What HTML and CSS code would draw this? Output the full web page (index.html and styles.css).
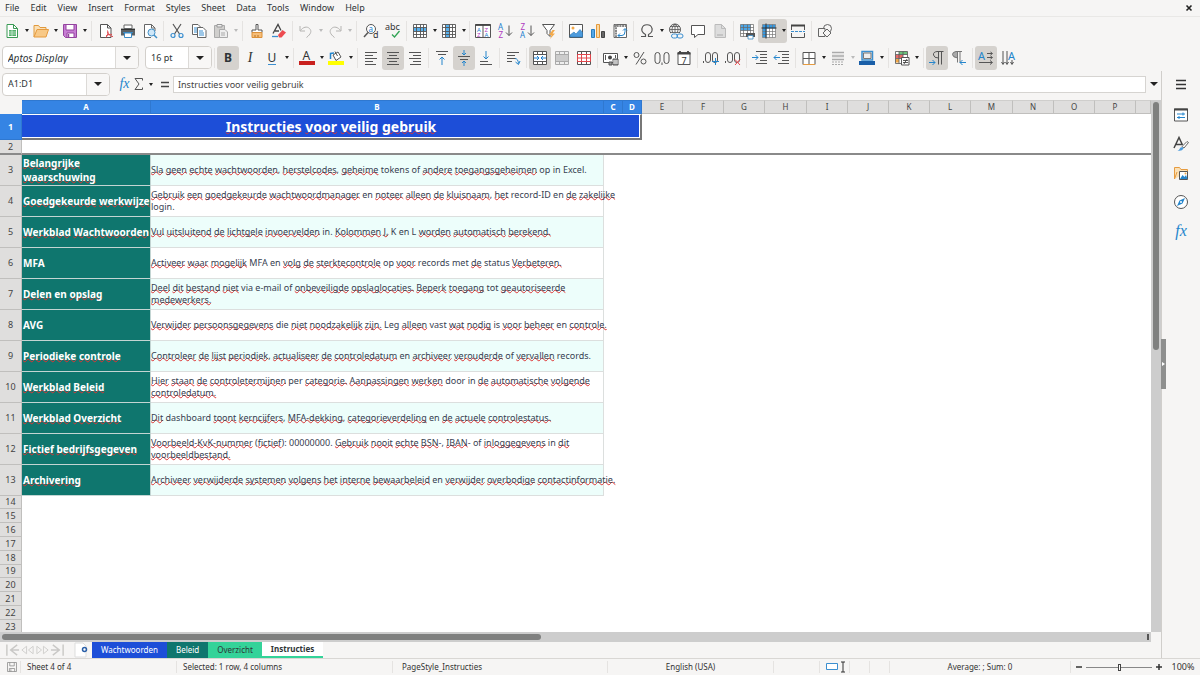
FILE: index.html
```html
<!DOCTYPE html>
<html lang="en">
<head>
<meta charset="utf-8">
<title>Instructies</title>
<link rel="stylesheet" href="styles.css">
</head>
<body>
<header class="top">
  <nav class="menubar">
    <button>File</button><button>Edit</button><button>View</button><button>Insert</button><button>Format</button><button>Styles</button><button>Sheet</button><button>Data</button><button>Tools</button><button>Window</button><button>Help</button>
    <button class="close" aria-label="Close document"><svg viewBox="0 0 8 8"><path d="M1.500 1.500l5 5M6.500 1.500l-5 5" stroke="#222" stroke-width="1.600"/></svg></button>
  </nav>
  <div class="toolbar" role="toolbar" aria-label="Standard">
    <button class="tool" aria-label="New"><svg viewBox="0 0 16 16"><path d="M3 1.500h6.500l4 4v9H3z" fill="#fff" stroke="#3a9a55"/><path d="M9.500 1.500v4h4" stroke="#3a9a55"/><path d="M5 7h7v6H5z" fill="#54b06c"/><path d="M5 9h7M5 11h7M8 7v6" stroke="#d9f0df" stroke-width=".7"/></svg></button><button class="drop" aria-label="New options"></button>
    <button class="tool" aria-label="Open"><svg viewBox="0 0 16 16"><path d="M1 14V2.500h4.500l1.500 2h6V7" fill="#fbe0b5" stroke="#e09a3e"/><path d="M1 14L4 6.500h11.500L13 14z" fill="#f8c987" stroke="#e69b3f"/></svg></button><button class="drop" aria-label="Open options"></button>
    <button class="tool" aria-label="Save"><svg viewBox="0 0 16 16"><path d="M1.500 1.500h13v13h-11l-2-2z" fill="#c77dd4" stroke="#94449f"/><path d="M4 1.500h8v5.500H4zM5 10h7v4.500H5z" fill="#fff" stroke="#94449f"/><path d="M6.500 11v3" stroke="#94449f" stroke-width="1.500"/></svg></button><button class="drop" aria-label="Save options"></button>
    <span class="sep"></span>
    <button class="tool" aria-label="Export as PDF"><svg viewBox="0 0 16 16"><path d="M2.500 1.500h7l3.500 3.500v9.500H2.500z" fill="#fff" stroke="#555"/><path d="M9.500 1.500v3.500h3.500" stroke="#555"/><path d="M8 14.500c2-3 2.500-4.500 1.500-7M9.500 9c1 3 3 4.500 5.500 4.500M8 13c2-1.500 4-2 6-1.500" stroke="#e0474c"/></svg></button>
    <button class="tool" aria-label="Print"><svg viewBox="0 0 16 16"><path d="M4 2h8v3.500H4z" fill="#fff" stroke="#666"/><path d="M1 5.500h14v7H1z" fill="#5b6165"/><path d="M1 6.500h14" stroke="#333"/><path d="M4.500 10h7v4.500h-7z" fill="#fff" stroke="#3b8ac4"/><path d="M3 9.500h10" stroke="#3b8ac4"/></svg></button>
    <button class="tool" aria-label="Print preview"><svg viewBox="0 0 16 16"><path d="M13 8V5L9.500 1.500h-7v13H9" fill="#fff" stroke="#666"/><path d="M9.500 1.500V5H13" stroke="#666"/><circle cx="9.500" cy="9.500" r="3.500" fill="#cfe7f8" stroke="#418fc7"/><path d="M12 12l3 3" stroke="#418fc7" stroke-width="1.500"/></svg></button>
    <span class="sep"></span>
    <button class="tool" aria-label="Cut"><svg viewBox="0 0 16 16"><path d="M4 1l6.500 10M12 1L5.500 11" stroke="#555" stroke-width="1.200"/><circle cx="4" cy="12.500" r="2" stroke="#3b8fd0" stroke-width="1.200"/><circle cx="12" cy="12.500" r="2" stroke="#3b8fd0" stroke-width="1.200"/></svg></button>
    <button class="tool" aria-label="Copy"><svg viewBox="0 0 16 16"><path d="M1.500 1.500h5.500l3 3v7H1.500z" fill="#fff" stroke="#666"/><path d="M3 5h4M3 7h3M3 9h3" stroke="#3b8fd0"/><path d="M6.500 4.500H12l3 3v7H6.500z" fill="#fff" stroke="#666"/><path d="M8 8h4M8 10h5M8 12h5" stroke="#3b8fd0"/></svg></button>
    <button class="tool" aria-label="Paste" disabled><svg viewBox="0 0 16 16"><path d="M1.500 2.500h10v12h-10z" fill="#d0cfcd" stroke="#aaa"/><path d="M4 1.500h5V4H4z" fill="#eee" stroke="#999"/><path d="M6.500 6.500H12l2.500 2.500v5.500h-8z" fill="#eee" stroke="#aaa"/><path d="M8 10h4M8 12h4" stroke="#aaa"/></svg></button><button class="drop" aria-label="Paste options" disabled></button>
    <span class="sep"></span>
    <button class="tool" aria-label="Clone formatting"><svg viewBox="0 0 16 16"><path d="M7 1.500h2V7h4v2.500H3V7h4z" fill="#fff" stroke="#555"/><path d="M3 9.500h10v5H3z" fill="#f6bd78" stroke="#dc9139"/><path d="M6 14v-2M9 14v-2" stroke="#b77424"/></svg></button>
    <button class="tool" aria-label="Clear formatting"><svg viewBox="0 0 16 16"><path d="M2 10.500L7 1.500l3 6M4 8h4" stroke="#444" stroke-width="1.300"/><path d="M1 13.500h6" stroke="#3b8fd0" stroke-width="1.300"/><path d="M7 12l4.500-5L15 9.500 10.500 14.500H8z" fill="#ed4b50"/></svg></button>
    <span class="sep"></span>
    <button class="tool" aria-label="Undo" disabled><svg viewBox="0 0 16 16"><path d="M2 3v5h5M2.500 7.500C5 4 9 3 11.500 5.500s1.500 5.500-3 9" stroke="#b5b4b2"/></svg></button><button class="drop" aria-label="Undo options" disabled></button>
    <button class="tool" aria-label="Redo" disabled><svg viewBox="0 0 16 16"><path d="M14 3v5H9M13.500 7.500C11 4 7 3 4.500 5.500S3 11 7.500 14.500" stroke="#b5b4b2"/></svg></button><button class="drop" aria-label="Redo options" disabled></button>
    <span class="sep"></span>
    <button class="tool" aria-label="Find and replace"><svg viewBox="0 0 16 16"><circle cx="8" cy="6" r="4.500" fill="#fff" stroke="#555"/><path d="M5 9.500L1 14" stroke="#555" stroke-width="1.500"/><text x="5.500" y="8.500" font-size="8" fill="#1c7fd0">a</text><text x="10" y="15" font-size="9" fill="#333">d</text></svg></button>
    <button class="tool" aria-label="Spelling"><svg viewBox="0 0 16 16"><text x="0" y="7" font-size="9" fill="#333">abc</text><path d="M7 11.500l2.500 2.500L14.500 8" stroke="#31a354" stroke-width="1.300"/></svg></button>
    <span class="sep"></span>
    <button class="tool" aria-label="Row"><svg viewBox="0 0 16 16"><path d="M1.500 1.500h13v13h-13z" fill="#fff"/><path d="M1.500 4.500h13v4h-13z" fill="#58b0ec"/><path d="M1.500 1.500h13v13h-13zM1.500 4.500h13M1.500 8.500h13M1.500 11.500h13M4.500 1.500v13M8.500 1.500v13M11.500 1.500v13" stroke="#555" stroke-width=".9"/></svg></button><button class="drop" aria-label="Row options"></button>
    <button class="tool" aria-label="Column"><svg viewBox="0 0 16 16"><path d="M1.500 1.500h13v13h-13z" fill="#fff"/><path d="M5 1.500h4v13H5z" fill="#58b0ec"/><path d="M1.500 1.500h13v13h-13zM1.500 4.500h13M1.500 8.500h13M1.500 11.500h13M4.500 1.500v13M8.500 1.500v13M11.500 1.500v13" stroke="#555" stroke-width=".9"/></svg></button><button class="drop" aria-label="Column options"></button>
    <span class="sep tight"></span>
    <button class="tool" aria-label="Sort"><svg viewBox="0 0 16 16"><path d="M.5 1.500h15v13H.5zM8 1.500v13" fill="#fff" stroke="#555"/><path d="M.5 2h15" stroke="#444" stroke-width="1.800"/><text x="2" y="8.500" font-size="6" fill="#1c7fd0">A</text><text x="2" y="14" font-size="6" fill="#b03ac0">Z</text><text x="9.500" y="8.500" font-size="6" fill="#b03ac0">Z</text><text x="9.500" y="14" font-size="6" fill="#1c7fd0">A</text></svg></button>
    <button class="tool" aria-label="Sort ascending"><svg viewBox="0 0 16 16"><text x="1" y="7" font-size="8" fill="#1c7fd0">A</text><text x="1.500" y="15" font-size="8" fill="#b03ac0">Z</text><path d="M12 2.500v10M9 9.500l3 3 3-3" stroke="#555"/></svg></button>
    <button class="tool" aria-label="Sort descending"><svg viewBox="0 0 16 16"><text x="1.500" y="7" font-size="8" fill="#b03ac0">Z</text><text x="1" y="15" font-size="8" fill="#1c7fd0">A</text><path d="M12 2.500v10M9 9.500l3 3 3-3" stroke="#555"/></svg></button>
    <button class="tool" aria-label="AutoFilter"><svg viewBox="0 0 16 16"><path d="M1.500 1.500h12L9 7.500v6l-3-3v-3z" fill="#fff" stroke="#555"/><path d="M11.500 7L8 12h2.500L9 16l5-5.500h-2.500L14 7z" fill="#f3a949"/></svg></button>
    <span class="sep"></span>
    <button class="tool" aria-label="Image"><svg viewBox="0 0 16 16"><path d="M1.500 1.500h13v13h-13z" fill="#fff" stroke="#555"/><circle cx="5" cy="5" r="1.500" fill="#f3a949"/><path d="M2 14V12l4-3 2 2 4-4.500 2.500 3V14z" fill="#4c9bdd" stroke="#2a78b8" stroke-width=".6"/></svg></button>
    <button class="tool" aria-label="Chart"><svg viewBox="0 0 16 16"><path d="M1.500 6.500h3v8h-3z" fill="#55a7e6" stroke="#2a7fc0"/><path d="M6.500 1.500h3v13h-3z" fill="#fbd9a2" stroke="#e49a3c"/><path d="M11.500 8.500h3v6h-3z" fill="#666" stroke="#444"/></svg></button>
    <button class="tool" aria-label="Pivot table"><svg viewBox="0 0 16 16"><path d="M2 1.500h12.500v13H2z" fill="#fff" stroke="#666"/><path d="M2 3h12.500M4 1.500v13" stroke="#888" stroke-width="2" stroke-dasharray="2 .7"/><path d="M6 12.500h4q3 0 3-4V6M8 10.500l-2 2 2 2M11 7.500L13 5.500l2 2" stroke="#2485cc"/></svg></button>
    <span class="sep"></span>
    <button class="tool" aria-label="Special character"><svg viewBox="0 0 16 16"><path d="M2 13.500h4.500v-2C3 9.500 2.500 7 3 5.500 4 .5 12 .5 13 5.500c.5 2-.5 4.500-3.500 6v2H14" stroke="#555" stroke-width="1.200"/></svg></button><button class="drop" aria-label="Character options"></button>
    <button class="tool" aria-label="Hyperlink"><svg viewBox="0 0 16 16"><circle cx="7" cy="6.500" r="5.500" stroke="#555"/><path d="M1.500 6.500h11M7 1v11M2.500 3.500h9M2.500 9.500h9M7 1C3 4 3 9 7 12M7 1c4 3 4 8 0 11" stroke="#555" stroke-width=".8"/><path d="M3 10h13v6H3z" fill="#f6f5f4"/><rect x="3.500" y="11" width="6" height="4" rx="2" stroke="#3b8fd0"/><rect x="9" y="11" width="6" height="4" rx="2" stroke="#3b8fd0"/></svg></button>
    <button class="tool" aria-label="Comment"><svg viewBox="0 0 16 16"><path d="M1.500 2.500h13v9H8l-3.500 3v-3h-3z" fill="#fff" stroke="#555"/></svg></button>
    <button class="tool" aria-label="Headers and footers" disabled><svg viewBox="0 0 16 16"><path d="M3 1.500h6.500l4 4v9H3z" fill="#ddd" stroke="#bbb"/><path d="M9.500 1.500v4h4" stroke="#bbb"/><path d="M5 11h6v2H5z" fill="#c4c4c4"/></svg></button>
    <span class="sep"></span>
    <button class="tool" aria-label="Print area"><svg viewBox="0 0 16 16"><path d="M1.500 1.500h13v10h-13z" fill="#fff"/><path d="M1.500 1.500h10v6h-10z" fill="#4ba5e6"/><path d="M1.500 1.500h13v12h-13zM1.500 4.500h13M1.500 7.500h13M1.500 10.500h13M4.500 1.500v12M8.500 1.500v12M11.500 1.500v12" stroke="#666" stroke-width=".7"/><path d="M7 10h9v4H7z" fill="#555"/><path d="M9 12.500h5V16H9z" fill="#fff" stroke="#3b8ac4" stroke-width=".8"/></svg></button>
    <span class="joined on"><button class="tool" aria-label="Freeze rows and columns" aria-pressed="true"><svg viewBox="0 0 16 16"><path d="M1.500 1.500h13v13h-13z" fill="#fff"/><path d="M1.500 1.500h13v4h-9v9h-4z" fill="#3698e0"/><path d="M1.500 1.500h13v13h-13zM1.500 8.500h13M1.500 11.500h13M8.500 1.500v13M11.500 1.500v13" stroke="#777" stroke-width=".7"/><path d="M.5 5h15M5 .5v15" stroke="#333"/></svg></button><button class="drop" aria-label="Freeze options"></button></span>
    <button class="tool" aria-label="Split window"><svg viewBox="0 0 16 16"><path d="M1.500 2v5M14.500 2v5M1.500 10v4.500h13V10" stroke="#555"/><path d="M1 2.500h14" stroke="#444" stroke-width="2"/><path d="M1 8.500h14" stroke="#3b8fd0" stroke-dasharray="3 1"/></svg></button>
    <span class="sep"></span>
    <button class="tool" aria-label="Draw functions"><svg viewBox="0 0 16 16"><circle cx="10.500" cy="5.500" r="4" stroke="#666"/><path d="M1.500 5.500h6.500v8H1.500z" fill="#f6f5f4" stroke="#666"/><path d="M10 6l4 4-4 4-4-4z" fill="#f6f5f4" stroke="#666"/></svg></button>
  </div>
  <div class="toolbar format" role="toolbar" aria-label="Formatting">
    <span class="combo font"><input aria-label="Font name" value="Aptos Display"><button aria-label="Choose font"></button></span>
    <span class="combo size"><input aria-label="Font size" value="16 pt"><button aria-label="Choose size"></button></span>
    <span class="sep"></span>
    <button class="tool on" aria-label="Bold" aria-pressed="true"><b>B</b></button>
    <button class="tool" aria-label="Italic"><i>I</i></button>
    <button class="tool" aria-label="Underline"><span class="ul">U</span></button><button class="drop" aria-label="Underline options"></button>
    <span class="sep"></span>
    <button class="tool" aria-label="Font color"><svg viewBox="0 0 16 16"><text x="3.500" y="10" font-size="12" fill="#333">A</text><path d="M0 11h16v4H0z" fill="#c9211e"/></svg></button><button class="drop" aria-label="Font color options"></button>
    <button class="tool" aria-label="Highlighting"><svg viewBox="0 0 16 16"><path d="M5 5l5-3 3 5-5 3.500z" fill="#fff" stroke="#555"/><path d="M7 1.500L9.500 6" stroke="#555"/><path d="M2.500 9V3.500L6 3" stroke="#2485cc" stroke-width="1.500"/><path d="M0 11h16v4H0z" fill="#ff0"/></svg></button><button class="drop" aria-label="Highlighting options"></button>
    <span class="sep"></span>
    <button class="tool" aria-label="Align left"><svg viewBox="0 0 16 16"><path d="M2 2.500h12M2 5.500h8M2 8.500h12M2 11.500h8M2 14.500h11" stroke="#555"/></svg></button>
    <button class="tool on" aria-label="Center" aria-pressed="true"><svg viewBox="0 0 16 16"><path d="M2 2.500h12M4 5.500h8M2 8.500h12M4 11.500h8M2 14.500h12" stroke="#555"/></svg></button>
    <button class="tool" aria-label="Align right"><svg viewBox="0 0 16 16"><path d="M2 2.500h12M6 5.500h8M2 8.500h12M6 11.500h8M3 14.500h11" stroke="#555"/></svg></button>
    <span class="sep"></span>
    <button class="tool" aria-label="Align top"><svg viewBox="0 0 16 16"><path d="M2 1.500h12M4 4.500h8" stroke="#555"/><path d="M8 15V7M5.500 9.500L8 7l2.500 2.500" stroke="#2485cc"/></svg></button>
    <button class="tool on" aria-label="Center vertically" aria-pressed="true"><svg viewBox="0 0 16 16"><path d="M2 6.500h12M4 9.500h8" stroke="#555"/><path d="M8 0v5M6 3l2 2 2-2M8 16v-5M6 13l2-2 2 2" stroke="#2485cc"/></svg></button>
    <button class="tool" aria-label="Align bottom"><svg viewBox="0 0 16 16"><path d="M2 11.500h8M2 14.500h12" stroke="#555"/><path d="M8 1v8M5.500 6.500L8 9l2.500-2.500" stroke="#2485cc"/></svg></button>
    <span class="sep"></span>
    <button class="tool" aria-label="Wrap text"><svg viewBox="0 0 16 16"><path d="M2 2.500h12M2 5.500h8M2 8.500h9M2 11.500h5" stroke="#555"/><path d="M10 8.500q3 0 3.500 5M10.500 12l3 2.500L15 11" stroke="#2485cc"/></svg></button>
    <span class="sep"></span>
    <button class="tool on" aria-label="Merge and center" aria-pressed="true"><svg viewBox="0 0 16 16"><path d="M1.500 1.500h13v13h-13z" fill="#fff"/><path d="M1.500 1.500h13v13h-13zM1.500 4.500h13M1.500 11.500h13M5.500 1.500v3M10.500 1.500v3M5.500 11.500v3M10.500 11.500v3" stroke="#555"/><path d="M2 8h5M14 8H9M5 6L7 8 5 10M11 6L9 8l2 2" stroke="#1c7fd0"/></svg></button>
    <button class="tool" aria-label="Merge cells" disabled><svg viewBox="0 0 16 16"><path d="M1.500 1.500h13v13h-13z" fill="#eee"/><path d="M1.500 4.500h13v7h-13z" fill="#ccc"/><path d="M1.500 1.500h13v13h-13zM1.500 4.500h13M1.500 11.500h13M5.500 1.500v3M10.500 1.500v3M5.500 11.500v3M10.500 11.500v3" stroke="#aaa"/></svg></button>
    <button class="tool" aria-label="Unmerge cells"><svg viewBox="0 0 16 16"><path d="M1.500 1.500h13v13h-13z" fill="#fff" stroke="#555"/><path d="M5.500 1.500v3M10.500 1.500v3M5.500 11.500v3M10.500 11.500v3" stroke="#555"/><path d="M1.500 4.500h13v7h-13zM5.500 4.500v7M10.500 4.500v7M1.500 8h13" stroke="#e0474c"/></svg></button>
    <span class="sep"></span>
    <button class="tool" aria-label="Currency"><svg viewBox="0 0 16 16"><path d="M.5 3.500h14v9H.5z" fill="#fff" stroke="#555"/><circle cx="7" cy="7.500" r="2" fill="#444"/><path d="M2.500 5v5M12.500 5v3" stroke="#555"/><path d="M6 12h3v3H6zM10 9h5v6h-5z" fill="#999" stroke="#555"/><path d="M10 11h5M10 13h5" stroke="#eee"/></svg></button><button class="drop" aria-label="Currency options"></button>
    <button class="tool" aria-label="Percent"><svg viewBox="0 0 16 16"><circle cx="4.500" cy="5" r="2.500" stroke="#555"/><circle cx="11.500" cy="11.500" r="2.500" stroke="#555"/><path d="M12 2L4 14.500" stroke="#555"/></svg></button>
    <button class="tool" aria-label="Number"><svg viewBox="0 0 16 16"><rect x="1" y="2.500" width="5" height="11" rx="2.500" stroke="#555"/><rect x="10" y="2.500" width="5" height="11" rx="2.500" stroke="#555"/><path d="M8 12.500v2.500" stroke="#555"/></svg></button>
    <button class="tool" aria-label="Date"><svg viewBox="0 0 16 16"><path d="M2 2.500h12v12H2z" fill="#fff" stroke="#555"/><path d="M1.500 3.500h13M4 1v3M12 1v3" stroke="#444" stroke-width="1.800"/><text x="5.500" y="13.500" font-size="9" fill="#333">7</text></svg></button>
    <span class="sep"></span>
    <button class="tool" aria-label="Add decimal place"><svg viewBox="0 0 16 16"><rect x="2.500" y="2.500" width="5" height="10" rx="2.500" stroke="#555"/><rect x="9.500" y="2.500" width="5" height="10" rx="2.500" stroke="#555"/><path d="M.5 11v2" stroke="#555"/><path d="M12.500 8v7M9 11.500h7" stroke="#2485cc"/></svg></button>
    <button class="tool" aria-label="Delete decimal place"><svg viewBox="0 0 16 16"><rect x="2.500" y="2.500" width="5" height="10" rx="2.500" stroke="#555"/><rect x="9.500" y="2.500" width="5" height="10" rx="2.500" stroke="#555"/><path d="M.5 11v2" stroke="#555"/><path d="M10 9.500l5 5.500M15 9.500L10 15" stroke="#ed4b50"/></svg></button>
    <span class="sep"></span>
    <button class="tool" aria-label="Increase indent"><svg viewBox="0 0 16 16"><path d="M4 1.500h11M8 4.500h7M8 7.500h7M8 10.500h7M4 13.500h11" stroke="#555"/><path d="M0 7.500h6M3.500 5L6 7.500 3.500 10" stroke="#2485cc"/></svg></button>
    <button class="tool" aria-label="Decrease indent"><svg viewBox="0 0 16 16"><path d="M4 1.500h11M8 4.500h7M8 7.500h7M8 10.500h7M4 13.500h11" stroke="#555"/><path d="M0 7.500h6M2.500 5L0 7.500 2.500 10" stroke="#2485cc"/></svg></button>
    <span class="sep"></span>
    <button class="tool" aria-label="Borders"><svg viewBox="0 0 16 16"><path d="M2 2.500v12h12v-12zM8 2.500v12M2 8.500h12" fill="#fff" stroke="#555"/><path d="M2 14.500h12" stroke="#e69b3f"/></svg></button><button class="drop" aria-label="Border options"></button>
    <button class="tool" aria-label="Border style" disabled><svg viewBox="0 0 16 16"><path d="M2 2.500h12M2 9.500h12" stroke="#aaa" stroke-width="1.500"/><path d="M2 6h12" stroke="#bbb" stroke-width="2.500"/><path d="M2 12h12M2 14.500h12" stroke="#aaa" stroke-dasharray="2 1"/></svg></button><button class="drop" aria-label="Border style options" disabled></button>
    <button class="tool" aria-label="Border color"><svg viewBox="0 0 16 16"><path d="M3 1.500h10.500V10H3z" fill="#eee" stroke="#3b8fd0" stroke-width="1.500"/><path d="M4.500 3h7.500v5.500H4.500z" stroke="#777"/><path d="M0 11h16v4H0z" fill="#1a5fa8"/></svg></button><button class="drop" aria-label="Border color options"></button>
    <span class="sep"></span>
    <button class="tool" aria-label="Conditional formatting"><svg viewBox="0 0 16 16"><path d="M1.500 1.500h12v11h-12z" fill="#fff"/><path d="M5 1.500h8.500v3H5z" fill="#6ac27a"/><path d="M1.500 5H5v3H1.500zM5 5h4v3H5z" fill="#e86a6a"/><path d="M1.500 9H5v3.500H1.500z" fill="#f3a949"/><path d="M1.500 1.500h12v12h-12zM1.500 4.500h12M1.500 8.500h12M5 1.500v12M9 1.500v12" stroke="#555" stroke-width=".8"/><path d="M7.500 7.500h7.500V15H7.500z" fill="#fff" stroke="#555"/><path d="M9 10.500h5M9 12.500h5M13 9l-3 5" stroke="#333" stroke-width=".8"/></svg></button><button class="drop" aria-label="Conditional options"></button>
    <span class="sep"></span>
    <button class="tool on" aria-label="Left to right" aria-pressed="true"><svg viewBox="0 0 16 16"><path d="M9.500 14.500v-13M12.500 14.500v-13M14.500 1.500H8q-4 .5-3.500 3.500T9.500 8" stroke="#555"/><path d="M0 12.500h6M3.500 10L6 12.500 3.500 15" stroke="#2485cc"/></svg></button>
    <button class="tool" aria-label="Right to left"><svg viewBox="0 0 16 16"><path d="M7 1.500Q1.500 1 1.500 4.500T7 8z" fill="#aaa"/><path d="M6.500 12.500v-11M9 12.500v-11M11 1.500H5Q1.500 2 1.500 4.500T6.500 8" stroke="#777"/><path d="M9 12.500h6M11.500 10L9 12.500l2.500 2.500" stroke="#2485cc"/></svg></button>
    <span class="sep"></span>
    <button class="tool on" aria-label="Text direction left to right" aria-pressed="true"><svg viewBox="0 0 16 16"><text x="0" y="9.500" font-size="11" fill="#2485cc">A</text><path d="M9 3.500h5M9 7.500h5M1 12.500h13M12.500 2L14.500 3.500 12.500 5M12.500 6l2 1.500-2 1.500M12 10.500l2.500 2-2.500 2" stroke="#555"/></svg></button>
    <button class="tool" aria-label="Text direction top to bottom"><svg viewBox="0 0 16 16"><text x="8" y="9.500" font-size="11" fill="#2485cc">A</text><path d="M3 1v13M7 1v13M12 10v4M1.500 12L3 14.500 4.500 12M5.500 12L7 14.500 8.500 12M10.500 12l1.500 2.500 1.500-2.500" stroke="#555"/></svg></button>
  </div>
</header>
<main class="work">
  <section class="sheet">
    <div class="formulabar">
      <span class="combo name"><input aria-label="Name box" value="A1:D1"><button aria-label="Choose range"></button></span>
      <button class="fx" aria-label="Function wizard"><i>fx</i></button>
      <button class="mini" aria-label="Sum"><svg viewBox="0 0 12 16"><path d="M9.500 4.500V2.500H2L6 8l-4 5.500h7.500v-2" stroke="#555"/></svg></button><button class="drop" aria-label="Sum options"></button>
      <button class="mini eq" aria-label="Formula"><svg viewBox="0 0 12 16"><path d="M2 6.500h8M2 10.500h8" stroke="#444" stroke-width="1.500"/></svg></button>
      <input class="formula" aria-label="Input line" value="Instructies voor veilig gebruik">
      <button class="expand" aria-label="Expand formula bar"></button>
    </div>
    <div class="gridarea">
      <div class="gridbox">
      <table class="grid">
        <colgroup><col class="rh"><col class="ca"><col class="cb"><col class="cc"><col class="cd"><col class="cn"><col class="cn"><col class="cn"><col class="cw"><col class="cn"><col class="cn"><col class="cn"><col class="cn"><col class="cw"><col class="cn"><col class="cn"><col class="cn"><col></colgroup>
        <thead><tr><th class="corner"></th><th class="sel">A</th><th class="sel">B</th><th class="sel">C</th><th class="sel">D</th><th>E</th><th>F</th><th>G</th><th>H</th><th>I</th><th>J</th><th>K</th><th>L</th><th>M</th><th>N</th><th>O</th><th>P</th><th></th></tr></thead>
        <tbody>
          <tr class="r1"><th class="sel">1</th><td class="title" colspan="4"><u>Instructies</u> <u>voor</u> <u>veilig</u> <u>gebruik</u></td><td colspan="13"></td></tr>
          <tr class="r2"><th>2</th><td colspan="17"></td></tr>
          <tr class="rec"><th>3</th><td class="key"><u>Belangrijke</u><br><u>waarschuwing</u></td><td class="txt"><u>Sla</u> <u>geen</u> <u>echte</u> <u>wachtwoorden</u>, <u>herstelcodes</u>, <u>geheime</u> tokens of <u>andere</u> <u>toegangsgeheimen</u> op in Excel.</td><td colspan="15"></td></tr>
          <tr class="rec"><th>4</th><td class="key"><u>Goedgekeurde</u> <u>werkwijze</u></td><td class="txt"><u>Gebruik</u> <u>een</u> <u>goedgekeurde</u> <u>wachtwoordmanager</u> en <u>noteer</u> <u>alleen</u> <u>de</u> <u>kluisnaam</u>, <u>het</u> record-ID en <u>de</u> <u>zakelijke</u><br>login.</td><td colspan="15"></td></tr>
          <tr class="rec"><th>5</th><td class="key"><u>Werkblad</u> <u>Wachtwoorden</u></td><td class="txt"><u>Vul</u> <u>uitsluitend</u> <u>de</u> <u>lichtgele</u> <u>invoervelden</u> in. <u>Kolommen</u> <u>J,</u> K en L <u>worden</u> <u>automatisch</u> <u>berekend.</u></td><td colspan="15"></td></tr>
          <tr class="rec"><th>6</th><td class="key">MFA</td><td class="txt"><u>Activeer</u> <u>waar</u> <u>mogelijk</u> MFA en <u>volg</u> <u>de</u> <u>sterktecontrole</u> op <u>voor</u> records met <u>de</u> status <u>Verbeteren.</u></td><td colspan="15"></td></tr>
          <tr class="rec"><th>7</th><td class="key"><u>Delen</u> en <u>opslag</u></td><td class="txt"><u>Deel</u> <u>dit</u> <u>bestand</u> <u>niet</u> via e-mail of <u>onbeveiligde</u> <u>opslaglocaties.</u> <u>Beperk</u> <u>toegang</u> tot <u>geautoriseerde</u><br><u>medewerkers.</u></td><td colspan="15"></td></tr>
          <tr class="rec"><th>8</th><td class="key">AVG</td><td class="txt"><u>Verwijder</u> <u>persoonsgegevens</u> die <u>niet</u> <u>noodzakelijk</u> <u>zijn.</u> Leg <u>alleen</u> vast <u>wat</u> <u>nodig</u> is <u>voor</u> <u>beheer</u> en <u>controle.</u></td><td colspan="15"></td></tr>
          <tr class="rec"><th>9</th><td class="key"><u>Periodieke</u> <u>controle</u></td><td class="txt"><u>Controleer</u> <u>de</u> <u>lijst</u> <u>periodiek</u>, <u>actualiseer</u> <u>de</u> <u>controledatum</u> en <u>archiveer</u> <u>verouderde</u> of <u>vervallen</u> records.</td><td colspan="15"></td></tr>
          <tr class="rec"><th>10</th><td class="key"><u>Werkblad</u> <u>Beleid</u></td><td class="txt"><u>Hier</u> <u>staan</u> <u>de</u> <u>controletermijnen</u> per <u>categorie.</u> <u>Aanpassingen</u> <u>werken</u> door in <u>de</u> <u>automatische</u> <u>volgende</u><br><u>controledatum.</u></td><td colspan="15"></td></tr>
          <tr class="rec"><th>11</th><td class="key"><u>Werkblad</u> <u>Overzicht</u></td><td class="txt"><u>Dit</u> dashboard <u>toont</u> <u>kerncijfers</u>, <u>MFA-dekking</u>, <u>categorieverdeling</u> en <u>de</u> <u>actuele</u> <u>controlestatus.</u></td><td colspan="15"></td></tr>
          <tr class="rec"><th>12</th><td class="key"><u>Fictief</u> <u>bedrijfsgegeven</u></td><td class="txt"><u>Voorbeeld-KvK-nummer</u> (<u>fictief</u>): 00000000. <u>Gebruik</u> <u>nooit</u> <u>echte</u> <u>BSN</u>-, <u>IBAN</u>- of <u>inloggegevens</u> in <u>dit</u><br><u>voorbeeldbestand.</u></td><td colspan="15"></td></tr>
          <tr class="rec"><th>13</th><td class="key"><u>Archivering</u></td><td class="txt"><u>Archiveer</u> <u>verwijderde</u> <u>systemen</u> <u>volgens</u> <u>het</u> <u>interne</u> <u>bewaarbeleid</u> en <u>verwijder</u> <u>overbodige</u> <u>contactinformatie.</u></td><td colspan="15"></td></tr>
        </tbody>
        <tbody class="blank">
          <tr><th>14</th><td colspan="17"></td></tr><tr><th>15</th><td colspan="17"></td></tr><tr><th>16</th><td colspan="17"></td></tr><tr><th>17</th><td colspan="17"></td></tr><tr><th>18</th><td colspan="17"></td></tr><tr><th>19</th><td colspan="17"></td></tr><tr><th>20</th><td colspan="17"></td></tr><tr><th>21</th><td colspan="17"></td></tr><tr><th>22</th><td colspan="17"></td></tr><tr><th>23</th><td colspan="17"></td></tr>
        </tbody>
      </table>
      </div>
      <div class="vscroll"><span></span></div>
    </div>
    <div class="hscroll"><span></span><i></i></div>
    <div class="tabs">
      <button class="nav" aria-label="First sheet"><svg viewBox="0 0 16 16"><path d="M2 2v12M13 2.500L6 8l7 5.500M6 8h9" stroke="#c9c8c6" stroke-width="1.500"/></svg></button>
      <button class="nav" aria-label="Previous sheet"><svg viewBox="0 0 16 16"><path d="M7 4L2 8l5 4zM14 4L9 8l5 4z" stroke="#cfcecc"/></svg></button>
      <button class="nav" aria-label="Next sheet"><svg viewBox="0 0 16 16"><path d="M2 4l5 4-5 4zM9 4l5 4-5 4z" stroke="#cfcecc"/></svg></button>
      <button class="nav" aria-label="Last sheet"><svg viewBox="0 0 16 16"><path d="M14 2v12M3 2.500L10 8l-7 5.500M1 8h9" stroke="#c9c8c6" stroke-width="1.500"/></svg></button>
      <button class="add" aria-label="Add sheet"><svg viewBox="0 0 14 16"><path d="M1 1h8l3 3v11H1z" fill="#fff" stroke="#ddd"/><circle cx="10.500" cy="7.500" r="2" stroke="#2a5fa8" stroke-width="1.500"/></svg></button>
      <button class="tab indigo">Wachtwoorden</button><button class="tab teal">Beleid</button><button class="tab green">Overzicht</button><button class="tab current">Instructies</button>
    </div>
  </section>
  <aside class="sidebar">
    <button aria-label="Sidebar settings"><svg viewBox="0 0 16 16"><path d="M3 4.500h10M3 8.500h10M3 12.500h10" stroke="#333" stroke-width="1.500"/></svg></button>
    <button aria-label="Properties"><svg viewBox="0 0 16 16"><path d="M1.500 2h13v12h-13z" fill="#fff" stroke="#555"/><path d="M1 2.500h14" stroke="#444" stroke-width="2"/><path d="M4 7h8M4 10.500h8M10 5.500v3M6 9v3" stroke="#2485cc"/></svg></button>
    <button aria-label="Styles"><svg viewBox="0 0 16 16"><path d="M1 12L6 1.500 9.500 9M3 8.500h6" stroke="#444" stroke-width="1.500"/><path d="M9 10.500L14 5.500l1.500 1L11 12z" fill="#fff" stroke="#666"/><path d="M4.500 14.500q2-.5 3-3 3-1 3 1-1.500 3-6 2z" fill="#4c9bdd"/></svg></button>
    <button aria-label="Gallery"><svg viewBox="0 0 16 16"><path d="M1.500 14V2.500h5l1.500 2h6.500V7" fill="#fbe0b5" stroke="#e69b3f"/><path d="M1.500 14L4 7" stroke="#e69b3f"/><path d="M6.500 6.500h8v8h-8z" fill="#fff" stroke="#555"/><path d="M7 14l2.500-4 2 2 1.500-2 1.500 4z" fill="#2485cc"/><circle cx="12.500" cy="8.500" r="1" fill="#f3a949"/></svg></button>
    <button aria-label="Navigator"><svg viewBox="0 0 16 16"><circle cx="8" cy="8" r="6.500" fill="#fff" stroke="#555"/><path d="M12 4L9.500 9.500 4 12l2.500-5.500z" fill="#2485cc"/><circle cx="8" cy="8" r="1" fill="#fff"/></svg></button>
    <button class="fx" aria-label="Functions"><i>fx</i></button>
    <span class="handle"></span>
  </aside>
</main>
<footer class="status">
  <span class="disk"><svg viewBox="0 0 16 16"><path d="M2 2h12v12H2zM5 2v4.500h6V2M4.500 14v-4h7v4M6.500 11v3" stroke="#888"/></svg></span>
  <span class="s1">Sheet 4 of 4</span>
  <span class="s2">Selected: 1 row, 4 columns</span>
  <span class="s3">PageStyle_Instructies</span>
  <span class="s4">English (USA)</span>
  <span class="s5"></span>
  <span class="s6"><svg viewBox="0 0 20 12"><path d="M.5 2.500h11v6H.5z" fill="#fff" stroke="#3b8fd0"/><path d="M15 1h4M17 1v10M15 11h4" stroke="#333"/></svg></span>
  <span class="s7"></span><span class="s7"></span>
  <span class="s8">Average: ; Sum: 0</span>
  <button class="zb" aria-label="Zoom out"><svg viewBox="0 0 8 8"><path d="M1 4h6" stroke="#333" stroke-width="1.500"/></svg></button>
  <input class="zoom" type="range" aria-label="Zoom" min="0" max="100" value="50">
  <button class="zb" aria-label="Zoom in"><svg viewBox="0 0 8 8"><path d="M1 4h6M4 1v6" stroke="#333" stroke-width="1.500"/></svg></button>
  <span class="s9">100%</span>
</footer>
</body>
</html>
```
FILE: styles.css
```css
* { box-sizing: border-box; }
body {
  margin: 0;
  height: 100vh;
  display: flex;
  flex-direction: column;
  overflow: hidden;
  background: #f6f5f4;
  color: #2e3436;
  font: 9px/12px "Noto Sans", sans-serif;
}
button, input { font: inherit; color: inherit; margin: 0; padding: 0; border: 0; background: none; }
svg { display: block; fill: none; overflow: visible; }

.menubar { display: flex; height: 17px; border-bottom: 1px solid #e9e8e6; }
.menubar button { padding: 0 6px 0 5px; }
.menubar .close { margin-left: auto; margin-right: 1px; padding: 0 6px; }
.close svg { width: 8px; height: 8px; }

.toolbar { display: flex; align-items: center; height: 27px; padding-left: 1px; }
.toolbar > * { flex-shrink: 0; }
.tool { display: flex; align-items: center; justify-content: center; width: 22px; height: 24px; border-radius: 3px; font-size: 14px; }
.tool svg { width: 16px; height: 16px; }
.tool i { font-family: "Liberation Serif", serif; }
.tool .ul { font-size: 12px; line-height: 13px; border-bottom: 1px solid #3b8fd0; }
.tool b { font-size: 12px; }
.on { background: #d5d2ce; border-radius: 3px; }
.joined { display: flex; }
.drop { display: flex; align-items: center; justify-content: center; width: 7px; height: 24px; }
.drop::after, .combo button::after, .expand::after { content: ""; border: 2px solid transparent; border-top: 3px solid #222; border-bottom: 0; }
.drop:disabled::after { border-top-color: #bbb; }
.sep { width: 1px; height: 20px; margin: 0 2px; background: #e5e3e1; }
.drop + .sep { margin: 0 3px; }
.drop + .sep.tight { margin: 0 2px; }
.format .drop + .sep { margin: 0 2px 0 3px; }

.combo { display: flex; height: 23px; border: 1px solid #d3d0cc; border-radius: 4px; background: #fff; overflow: hidden; }
.combo input { flex: 1; min-width: 0; padding-left: 5px; }
.combo button { display: flex; align-items: center; justify-content: center; width: 23px; border-left: 1px solid #dcdad7; background: #f8f7f6; }
.combo button::after, .expand::after { border-width: 4px 4px 0; }
.font { width: 137px; margin: 0 6px 0 1px; }
.font input { font-style: italic; font-size: 10px; }
.size { width: 67px; }

.work { flex: 1; display: flex; min-height: 0; }
.sheet { flex: 1; min-width: 0; display: flex; flex-direction: column; }
.formulabar { display: flex; align-items: center; height: 26px; margin-bottom: 3px; padding-left: 2px; }
.name { width: 108px; margin-right: 7px; }
.fx { width: 15px; font-family: "Liberation Serif", serif; font-size: 14px; color: #2485cc; }
.mini { width: 14px; margin-left: 1px; }
.mini svg { width: 12px; height: 16px; }
.eq { margin: 0 0 0 5px; }
.formula { flex: 1; min-width: 0; height: 17px; padding-left: 4px; border: 1px solid #d6d4d1; background: #fff; color: #444; }
.expand { display: flex; align-items: center; justify-content: center; width: 15px; height: 20px; }

.gridarea { flex: 1; display: flex; min-height: 0; background: #fff; }
.gridbox { flex: 1; min-width: 0; overflow: hidden; }
.grid { width: 100%; table-layout: fixed; border-collapse: separate; border-spacing: 0; }
.grid th, .grid td { padding: 0; }
.rh { width: 22px; } .ca { width: 129px; } .cb { width: 453px; } .cc, .cd { width: 19px; } .cn { width: 41px; } .cw { width: 42px; }
.grid th { background: #dfdedd; color: #444; font-weight: 400; border-right: 1px solid #c0bfbd; border-bottom: 1px solid #c0bfbd; line-height: 12px; }
.grid thead th { height: 14px; font-size: 8px; border-top: 1px solid #cfcecc; }
.grid thead .corner { background: #f6f5f4; border-color: #f6f5f4; }
.grid th.sel { background: #3584e4; color: #fff; font-weight: 700; border-color: #2f78d0; }
.r1 > * { height: 26px; }
.r1 .title {
  background: #1d4ed8;
  color: #fff;
  font-size: 14px;
  font-weight: 700;
  line-height: 18px;
  text-align: center;
  border-top: 1px solid #fff;
  border-right: 2px solid #777;
  border-bottom: 2px solid #777;
  box-shadow: inset 0 -1px #fff, inset -1px 0 #fff;
}
.r2 > * { height: 15px; }
.grid .r2 > * { border-bottom: 2px solid #8a8a8a; }
.rec > * { height: 31px; }
.key, .txt { white-space: nowrap; }
.key { background: #0f766e; color: #fff; font-size: 10px; font-weight: 700; line-height: 14px; border-bottom: 1px solid #c3d5d3; border-right: 1px solid #c3d5d3; }
.grid .key { padding-left: 1px; }
.txt { color: #374151; border-bottom: 1px solid #dcdfde; border-right: 1px solid #dcdfde; }
.rec:nth-child(odd) .txt { background: #edfefb; }
.grid u { text-decoration: underline wavy #dd3333 1px; text-underline-offset: -2px; text-decoration-skip-ink: none; }
.blank tr > * { height: 14px; }
.blank tr:nth-child(5n+1) > * { height: 13px; }

.vscroll { width: 10px; padding: 2px; background: #cdcdcd; }
.vscroll span { display: block; width: 6px; height: 47%; border-radius: 3px; background: #7f807f; }
.hscroll { display: flex; justify-content: space-between; height: 10px; margin-right: 10px; padding: 2px; background: #cdcdcd; }
.hscroll span { width: 47%; height: 6px; border-radius: 3px; background: #7f807f; }
.hscroll i { width: 2px; height: 6px; background: #555; }
.tabs { display: flex; height: 16px; padding-left: 5px; }
.nav { width: 15px; }
.nav svg { width: 15px; height: 16px; }
.add { width: 18px; margin: 0 0 0 9px; }
.add svg { width: 14px; height: 16px; }
.tab { padding: 0 9px; font-size: 8px; line-height: 14px; }
.indigo { background: #1d4ed8; color: #fff; }
.teal { background: #0f766e; color: #fff; }
.green { background: #34d399; }
.current { background: #fff; font-weight: 700; border-bottom: 2px solid #34d399; }

.sidebar { position: relative; width: 39px; display: flex; flex-direction: column; align-items: center; gap: 13px; padding-top: 5px; border-left: 1px solid #d0cecb; }
.sidebar button { height: 16px; }
.sidebar button:first-child { margin-bottom: 2px; }
.sidebar svg { width: 16px; height: 16px; }
.sidebar .fx { font-size: 16px; line-height: 16px; }
.handle { position: absolute; left: -1px; top: 268px; width: 5px; height: 50px; background: #8e8f8e; }
.handle::after { content: ""; display: block; margin: 23px 1px; border: 2px solid transparent; border-left: 3px solid #fff; border-right: 0; }

.status { display: flex; align-items: center; height: 17px; border-top: 1px solid #d9d7d4; color: #333; font-size: 8px; }
.status > span { height: 12px; border-right: 1px solid #e5e3e1; }
.disk { width: 21px; padding-left: 6px; }
.disk svg { width: 12px; height: 12px; }
.s1 { width: 156px; padding-left: 6px; }
.s2 { width: 216px; padding-left: 6px; }
.s3 { width: 215px; padding-left: 9px; }
.s4 { width: 166px; text-align: center; }
.s5 { width: 46px; }
.s6 { width: 30px; padding-left: 6px; }
.s6 svg { width: 20px; height: 12px; }
.s7 { width: 20px; }
.s8 { flex: 1; text-align: center; margin-right: 1px; }
.zb { width: 14px; display: flex; justify-content: center; }
.zb svg { width: 8px; height: 8px; }
.zoom { width: 66px; height: 10px; appearance: none; }
.zoom::-webkit-slider-runnable-track { height: 1px; background: #888; }
.zoom::-webkit-slider-thumb { appearance: none; width: 3px; height: 7px; margin-top: -3px; border: 1px solid #444; background: #fff; }
.status .s9 { width: 34px; text-align: center; border: 0; font-size: 9px; }
```
